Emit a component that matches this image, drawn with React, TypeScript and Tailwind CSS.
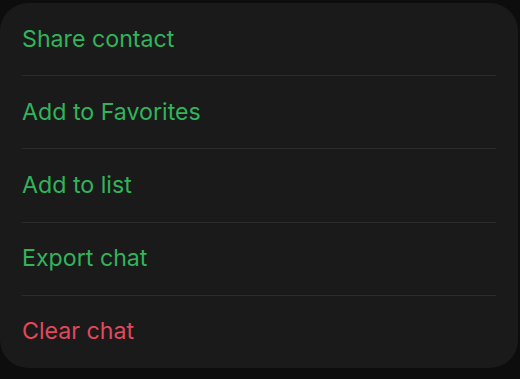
export default function App() {
  const items = [
    { label: "Share contact", danger: false },
    { label: "Add to Favorites", danger: false },
    { label: "Add to list", danger: false },
    { label: "Export chat", danger: false },
    { label: "Clear chat", danger: true },
  ]

  return (
    <div className="w-[520px] h-[379px] bg-[#0d0d0d] pt-[3px] pr-[2px] overflow-hidden">
      <div
        className="h-[365px] bg-[#1a1a1a] rounded-[28px] pl-[22px] pr-[22px] flex flex-col"
        style={{ fontFamily: "Inter, 'Liberation Sans', sans-serif" }}
      >
        {items.map((item, i) => (
          <div
            key={item.label}
            className={`flex-1 flex items-center ${i < items.length - 1 ? "border-b border-[#2c2c2c]" : ""}`}
          >
            <span
              className={`text-[23.2px] leading-none ${item.danger ? "text-[#e3485b]" : "text-[#31b45b]"}`}
            >
              {item.label}
            </span>
          </div>
        ))}
      </div>
    </div>
  )
}
